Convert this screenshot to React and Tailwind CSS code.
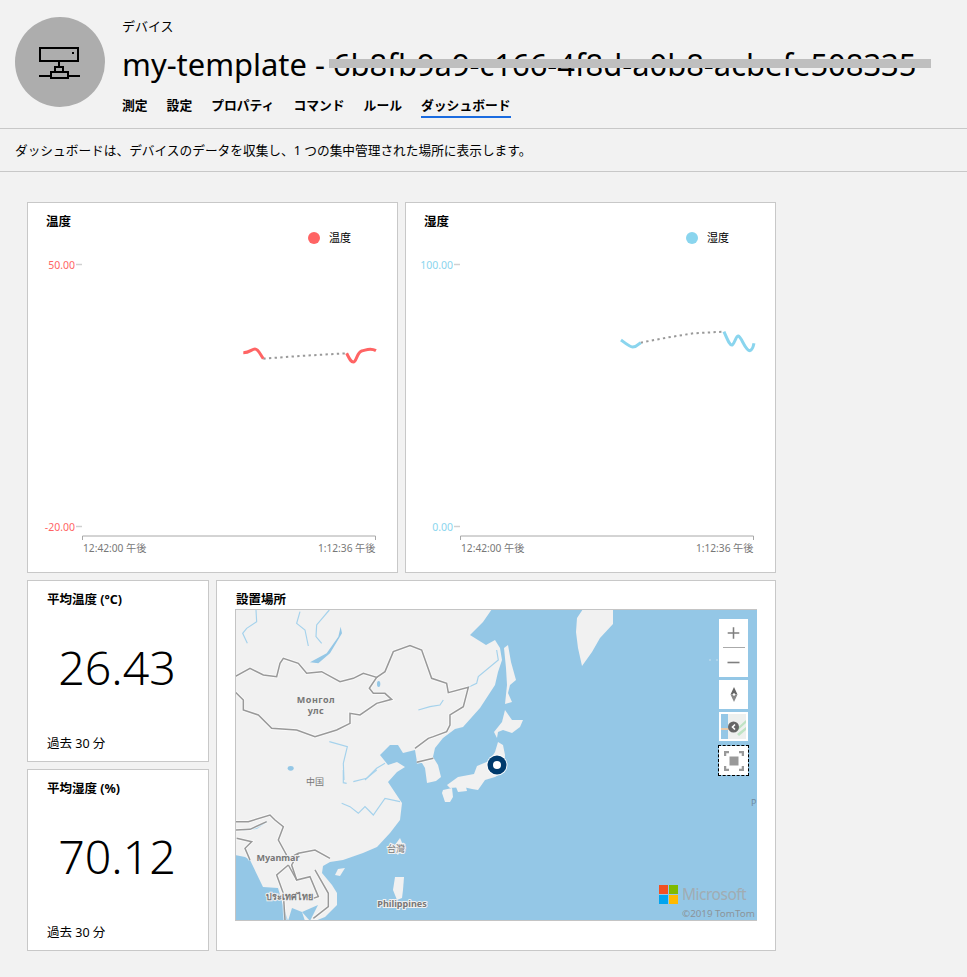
import React from 'react';

const mainland = "235,609 492,609 483,622 470,635 478,640 486,645 495,640 500,648 502,660 498,672 495,685 480,708 463,727 455,729 443,738 435,748 433,757 438,765 441,777 436,781 427,783 425,768 422,763 417,762 415,750 403,753 398,745 390,745 380,755 388,765 397,762 405,767 397,772 388,782 402,803 400,820 390,833 377,847 363,853 343,860 330,862 323,866 322,873 332,885 337,893 337,905 325,917 315,921 305,921 302,912 292,908 288,921 283,905 278,888 263,887 250,860 245,857 235,855";
const islands = [
    "508,645 511,662 516,680 510,685 508,693 512,702 505,704 507,685 506,668 504,648",
    "505,710 512,720 523,720 520,727 512,733 503,730 498,732 497,738 494,732 502,722",
    "498,742 503,745 505,755 504,772 495,777 485,780 478,790 472,789 463,787 450,788 447,785 458,777 474,774 477,766 489,761 495,752",
    "456,787 466,787 467,791 458,792",
    "443,790 452,788 453,797 450,802 445,802 442,793",
    "583,609 613,609 613,624 600,638 592,652 582,666 578,648 576,632 577,618",
    "400,838 403,845 398,855 396,853 395,845",
    "345,868 340,876 335,875 338,869",
    "395,877 404,877 403,890 402,898 397,900 393,890",
];
// zoom-space lines: page x = 230 + z / 3, page y = 600 + z / 3
const borders = [
    "15,230 60,205 100,225 140,230 150,190 160,175 205,190 230,220 275,215 330,245 370,235 400,220 440,232 418,265 430,280 465,280 485,298 440,310 390,345 360,340 360,370 320,390 255,410 200,390 125,385 85,345 40,330 40,300 15,275",
    "440,232 465,215 490,155 540,137 575,150 605,235 650,250 655,278 715,262 700,320 660,345 660,375 650,395 610,410 595,415 555,445",
    "560,487 610,475",
];
const rivers = [
    "78,30 80,65 50,85 38,100 52,130",
    "210,35 200,70 225,90 235,138",
    "298,30 260,75 258,110 275,130",
    "800,150 805,180 745,230 740,250 715,262",
    "565,330 600,320 630,315 640,300",
    "298,425 352,440 340,490 342,540",
    "405,540 440,505 465,490",
];
// lower part: page x = 230 + z / 3, page y = 770 + z / 3
const southBorders = [
    "18,155 55,155 120,135 135,150 160,170 145,210 175,265 205,250 255,240 300,265",
    "18,180 60,178 110,155",
    "20,205 65,215 45,235 60,270",
    "175,285 140,315 160,370 165,450",
    "205,250 185,285 200,330 240,320 265,380 250,385",
    "255,300 295,370 295,410 250,445",
    "175,285 200,330",
];
const southRivers = [
    "335,100 360,110 385,130 405,110 430,135 465,85 510,95",
    "340,0 340,38 350,40",
    "370,35 410,25 440,0",
    "40,180 80,175 110,155",
];

function DeviceIcon() {
    return (
        <svg viewBox="0 0 42 33" className="w-[42px] h-[33px] mt-[3px]" fill="none" stroke="#000" strokeWidth="2">
            <rect x="1" y="1" width="38" height="13" />
            <rect x="33" y="5" width="2" height="2" fill="#000" stroke="none" />
            <path d="M20 14v6M16 25v-5h8v5M0 29h12M29 29h12" />
            <rect x="12" y="25" width="17" height="6" />
        </svg>
    );
}

function LineChart({ title, color, top, bottom, zx, line1, dots, line2 }) {
    return (
        <div className="relative w-[371px] h-[371px] bg-white border border-[#c8c8c8]">
            <p className="pl-[18px] pt-[10px] text-[12.5px] leading-[18px] font-bold">{title}</p>
            <svg viewBox="0 0 369 369" className="absolute left-0 top-0 w-[369px] h-[369px]" fill="none">
                <circle cx="286" cy="35" r="6" fill={color} />
                <text x="301" y="39" fontSize="11" fill="#000">{title}</text>
                <text x="47" y="65.5" fontSize="10.5" fill={color} textAnchor="end">{top}</text>
                <path d="M48 61.5h6" stroke="#d0d0d0" strokeWidth="1.5" />
                <text x="47" y="327.5" fontSize="10.5" fill={color} textAnchor="end">{bottom}</text>
                <path d="M48 323.5h6" stroke="#d0d0d0" strokeWidth="1.5" />
                <path d="M54.5 337v-4h293v4" stroke="#a8a8a8" />
                <text x="55" y="349" fontSize="10.2" fill="#777">12:42:00 午後</text>
                <text x="347.5" y="349" fontSize="10.2" fill="#777" textAnchor="end">1:12:36 午後</text>
                <g transform={`translate(${zx} -3) scale(0.3333)`}>
                    <polyline points={dots} stroke="#999" strokeWidth="6" strokeDasharray="7 10" />
                    <path d={line1} stroke={color} strokeWidth="9" />
                    <path d={line2} stroke={color} strokeWidth="9" />
                </g>
            </svg>
        </div>
    );
}

function Tile({ title, value }) {
    return (
        <div className="flex flex-col w-[182px] h-[182px] bg-white border border-[#c8c8c8] px-[19px] pt-[10px] pb-[8px]">
            <p className="text-[12.5px] leading-[18px] font-bold">{title}</p>
            <div className="flex-1 flex items-center justify-center -mt-[9px] -ml-[2px] text-[46.5px] font-light leading-none">{value}</div>
            <p className="text-[12.5px] leading-[18px]">過去 30 分</p>
        </div>
    );
}

function MapView() {
    return (
        <div className="relative w-[522px] h-[312px] border-y border-l border-[#c4c4c4] bg-[#94c7e6] overflow-hidden">
            <svg viewBox="235 609 522 312" className="absolute -left-px -top-px w-[522px] h-[312px] blur-[0.5px]" fill="none">
                <polygon points={mainland} fill="#f1f1f1" />
                {islands.map((p, i) => <polygon key={i} points={p} fill="#f1f1f1" />)}
                <polygon points="310,921 318,905 302,912" fill="#94c7e6" />
                <g transform="translate(230 600) scale(0.3333)">
                    <path d="M332 80L325 110L290 160L240 187L265 190L300 160L336 100Z" fill="#94c7e6" />
                    <ellipse cx="446" cy="252" rx="5" ry="9" fill="#94c7e6" />
                    <ellipse cx="182" cy="505" rx="9" ry="7" fill="#94c7e6" />
                    {rivers.map((p, i) => <polyline key={i} points={p} stroke="#a5d2ec" strokeWidth="3.5" />)}
                    {borders.map((p, i) => <polyline key={i} points={p} stroke="#fff" strokeWidth="10" opacity="0.6" />)}
                    {borders.map((p, i) => <polyline key={i} points={p} stroke="#999" strokeWidth="4.5" />)}
                </g>
                <g transform="translate(230 770) scale(0.3333)">
                    {southRivers.map((p, i) => <polyline key={i} points={p} stroke="#a5d2ec" strokeWidth="3.5" />)}
                    {southBorders.map((p, i) => <polyline key={i} points={p} stroke="#fff" strokeWidth="10" opacity="0.6" />)}
                    {southBorders.map((p, i) => <polyline key={i} points={p} stroke="#999" strokeWidth="4.5" />)}
                </g>
                <circle cx="710" cy="660" r="0.7" fill="#dbe9f2" />
                <circle cx="717" cy="660" r="0.7" fill="#dbe9f2" />
            </svg>
            <svg viewBox="235 609 522 312" className="absolute -left-px -top-px w-[522px] h-[312px]" fill="none">
                <g fontSize="9" fontWeight="700" fill="#777" textAnchor="middle" stroke="#f1f1f1" strokeWidth="2" paintOrder="stroke">
                    <text x="316" y="703" letterSpacing="0.5">Монгол</text>
                    <text x="316" y="714" letterSpacing="0.5">улс</text>
                    <text x="315" y="785" fontWeight="400">中国</text>
                    <text x="396" y="852" fontWeight="400">台灣</text>
                    <text x="278" y="861">Myanmar</text>
                    <text x="289" y="900">ประเทศไทย</text>
                    <text x="402" y="907">Philippines</text>
                </g>
                <circle cx="497" cy="765" r="10.5" fill="#fff" opacity="0.9" />
                <circle cx="497" cy="765" r="9.5" fill="#003a6c" />
                <circle cx="497" cy="765" r="4" fill="#fff" />
                <text x="751" y="806" fontSize="9" fill="#6f8ba0">P</text>
            </svg>

            {/* Map controls */}
            <div className="absolute left-[483px] top-[9px] w-[29px] flex flex-col gap-[3px]">
                <div className="h-[58px] bg-white flex flex-col items-center">
                    <svg viewBox="0 0 29 29" className="w-[29px] h-[28px]" stroke="#7f7f7f" strokeWidth="1.6"><path d="M8.5 14.5h12M14.5 8.5v12" /></svg>
                    <div className="w-[22px] h-px bg-[#aaa]" />
                    <svg viewBox="0 0 29 29" className="w-[29px] h-[29px]" stroke="#7f7f7f" strokeWidth="1.6"><path d="M8.5 14.5h12" /></svg>
                </div>
                <div className="h-[29px] bg-white flex items-center justify-center">
                    <svg viewBox="0 0 8 15" className="w-[8px] h-[15px]">
                        <path d="M4 0l3.5 7.5h-7z" fill="#666" />
                        <path d="M4 15l3.5-7.5h-7z" fill="#888" />
                        <circle cx="4" cy="7.5" r="1.2" fill="#fff" />
                    </svg>
                </div>
                <div className="relative h-[29px] bg-white p-[2px] overflow-hidden">
                    <svg viewBox="0 0 25 25" className="w-[25px] h-[25px]">
                        <rect width="25" height="25" fill="#eef0ee" />
                        <rect width="7" height="25" fill="#94c7e6" />
                        <path d="M14 16L25 6v3L15 18ZM16 20L25 13v3L18 22Z" fill="#bfe3c4" />
                        <path d="M0 15h16" stroke="#e8c9a8" strokeWidth="2" />
                        <circle cx="12.5" cy="13" r="5.5" fill="#666" />
                        <path d="M14 10.5l-2.5 2.5 2.5 2.5" stroke="#fff" strokeWidth="1.6" fill="none" />
                    </svg>
                </div>
                <div className="h-[29px] bg-white outline outline-1 outline-dashed outline-black flex items-center justify-center mt-[2px]">
                    <svg viewBox="0 0 20 20" className="w-[20px] h-[20px]" fill="none" stroke="#999" strokeWidth="2.5">
                        <path d="M1 5V1h4M15 1h4v4M19 15v4h-4M5 19H1v-4" />
                        <rect x="5.5" y="5.5" width="9" height="9" fill="#999" stroke="none" />
                    </svg>
                </div>
            </div>

            {/* Attribution */}
            <div className="absolute left-[423px] top-[275px] flex items-center gap-[4px]">
                <div className="grid grid-cols-2 gap-px w-[19px] h-[19px]">
                    <div className="bg-[#f25022]" />
                    <div className="bg-[#7fba00]" />
                    <div className="bg-[#00a4ef]" />
                    <div className="bg-[#ffb900]" />
                </div>
                <span className="text-[15.5px] leading-none text-[#a1acb3] tracking-[-0.5px]">Microsoft</span>
            </div>
            <span className="absolute left-[446px] top-[297px] text-[9.8px] leading-[14px] text-[#8b949a] whitespace-nowrap">©2019 TomTom</span>
        </div>
    );
}

export default function App() {
    const tabs = ["測定", "設定", "プロパティ", "コマンド", "ルール"];

    return (
        <div className="min-h-screen bg-[#f2f2f2] text-black font-['Noto_Sans','Noto_Sans_CJK_JP',sans-serif]">
            {/* Header */}
            <div className="relative flex h-[129px] border-b border-[#c8c8c8]">
                <div className="w-[90px] h-[90px] ml-[15px] mt-[17px] rounded-full bg-[#adadad] flex items-center justify-center">
                    <DeviceIcon />
                </div>
                <div className="ml-[17px] flex flex-col">
                    <p className="mt-[16px] text-[13px] leading-[20px]">デバイス</p>
                    <h1 className="mt-[6px] text-[30.9px] leading-[44px] whitespace-nowrap">my-template - 6b8fb9a9-c166-4f8d-a0b8-acbefe508335</h1>
                    <div className="mt-[10px] flex gap-[19px] text-[12.8px] leading-[18px] font-bold">
                        {tabs.map((tab) => (
                            <span key={tab}>{tab}</span>
                        ))}
                        <span className="border-b-2 border-[#1a6be0] h-[22px]">ダッシュボード</span>
                    </div>
                </div>
                <div className="absolute left-[329px] top-[59px] w-[602px] h-[9px] bg-[#bfbfbf]" />
            </div>

            <div className="h-[43px] flex items-center pl-[15px] pt-[2px] text-[12.7px] border-b border-[#c8c8c8]">
                ダッシュボードは、デバイスのデータを収集し、1 つの集中管理された場所に表示します。
            </div>

            {/* Dashboard tiles */}
            <div className="pt-[30px] pl-[27px] flex flex-col gap-[7px] pb-[26px]">
                <div className="flex gap-[7px]">
                    <LineChart
                        title="温度"
                        color="#ff6464"
                        top="50.00"
                        bottom="-20.00"
                        zx={-8}
                        line1="M670 458C690 458 695 447 705 447C715 447 720 462 730 476"
                        dots="730,476 855,467 980,460"
                        line2="M980 460C988 475 992 486 1000 486C1010 486 1010 458 1025 453C1040 450 1050 442 1068 452"
                    />
                    <LineChart
                        title="湿度"
                        color="#8ad5ee"
                        top="100.00"
                        bottom="0.00"
                        zx={-6}
                        line1="M663 420C680 433 690 441 698 441C710 441 715 434 722 428"
                        dots="722,428 800,413 880,400 972,395"
                        line2="M972 395C985 425 990 437 997 435C1005 430 1007 408 1015 408C1025 410 1035 452 1050 452C1058 450 1060 440 1062 430"
                    />
                </div>
                <div className="flex gap-[7px]">
                    <div className="flex flex-col gap-[7px]">
                        <Tile title="平均温度 (°C)" value="26.43" />
                        <Tile title="平均湿度 (%)" value="70.12" />
                    </div>
                    <div className="w-[560px] h-[371px] bg-white border border-[#c8c8c8] pl-[18px] pt-[9px]">
                        <p className="ml-px text-[12.5px] leading-[19px] font-bold">設置場所</p>
                        <MapView />
                    </div>
                </div>
            </div>
        </div>
    );
}
